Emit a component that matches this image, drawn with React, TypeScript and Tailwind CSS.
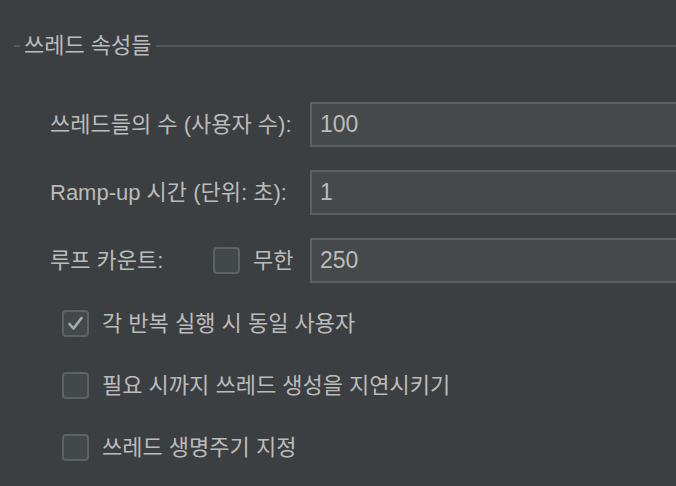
const font = { fontFamily: '"Liberation Sans", "Noto Sans CJK KR", sans-serif' };

function Box({ checked }: { checked?: boolean }) {
  return (
    <span className="flex h-[27px] w-[27px] shrink-0 items-center justify-center rounded-[4px] border-2 border-[#5f6263] bg-[#43484a]">
      {checked && (
        <svg width="17" height="17" viewBox="0 0 17 17" fill="none">
          <path d="M2.5 9 L6.5 13.5 L14.5 3" stroke="#a9abad" strokeWidth="2.6" strokeLinecap="round" strokeLinejoin="round" />
        </svg>
      )}
    </span>
  );
}

function Field({ value }: { value: string }) {
  return (
    <div className="flex h-[45px] flex-1 items-center border-2 border-[#5e6060] bg-[#45494a] pl-[8px] text-[23px] text-[#bcbcbc]">
      {value}
    </div>
  );
}

function CheckRow({ label, checked }: { label: string; checked?: boolean }) {
  return (
    <div className="flex h-[27px] items-center gap-[13px] pl-[62px]">
      <Box checked={checked} />
      <span>{label}</span>
    </div>
  );
}

export default function App() {
  return (
    <div className="h-[486px] w-[676px] overflow-hidden bg-[#3c3f41] text-[22px] text-[#bbbbbb]" style={font}>
      <div className="flex items-center pt-[33px]">
        <div className="ml-[14px] h-[2px] w-[6px] bg-[#555759]" />
        <span className="px-[4px] leading-[26px]">쓰레드 속성들</span>
        <div className="h-[2px] flex-1 bg-[#555759]" />
      </div>

      <div className="mt-[43px] flex flex-col gap-[23px] pl-[50px] -mr-[20px]">
        <div className="flex items-center">
          <span className="w-[260px] shrink-0">쓰레드들의 수 (사용자 수):</span>
          <Field value="100" />
        </div>
        <div className="flex items-center">
          <span className="w-[260px] shrink-0">Ramp-up 시간 (단위: 초):</span>
          <Field value="1" />
        </div>
        <div className="flex items-center">
          <span className="w-[163px] shrink-0">루프 카운트:</span>
          <div className="flex w-[97px] shrink-0 items-center gap-[13px]">
            <Box />
            <span>무한</span>
          </div>
          <Field value="250" />
        </div>
      </div>

      <div className="mt-[27px] flex flex-col gap-[35px]">
        <CheckRow label="각 반복 실행 시 동일 사용자" checked />
        <CheckRow label="필요 시까지 쓰레드 생성을 지연시키기" />
        <CheckRow label="쓰레드 생명주기 지정" />
      </div>
    </div>
  );
}
